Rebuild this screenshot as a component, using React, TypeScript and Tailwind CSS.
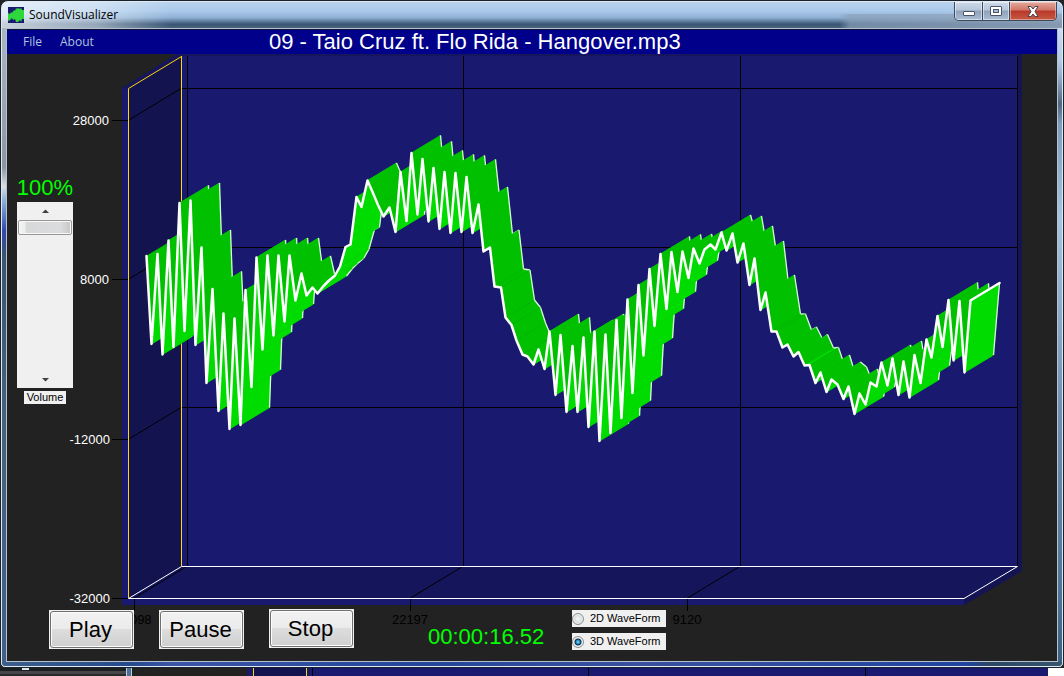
import React, { useState } from "react";

type Point = [number, number];

const WAVE: Point[] = [
  [146.5, 256], [151.5, 344], [157.5, 254], [162.5, 354.5], [168.5, 240.5], [173.5, 347], [179.5, 203], [184.5, 331],
  [190.5, 200.5], [195.5, 345], [201.5, 247.5], [206.5, 383], [212.5, 289], [218.5, 411], [223.5, 313.5], [229.5, 429],
  [234.5, 318.5], [240.5, 425], [245.5, 290], [251.5, 387], [256.5, 257.5], [262.5, 349.5], [267.5, 255.5],
  [273.5, 335.5], [278.5, 255.5], [284.5, 321.5], [289.5, 255.5], [295.5, 300.5], [301.5, 273.5], [306.5, 295.5],
  [312.5, 287.5], [317.5, 293.5], [323.5, 286], [328.5, 281], [335, 275.5], [340, 266.5], [345.5, 247], [350.5, 244.5],
  [356.5, 197], [361.5, 207], [367.5, 180.5], [373, 193], [378, 205], [383.5, 216.5], [389.5, 207.5], [395.5, 232],
  [400.5, 172], [406.5, 221], [411.5, 153], [417.5, 214.5], [422.5, 159], [428.5, 221.5], [433.5, 168], [439.5, 229],
  [444.5, 172], [450.5, 233], [455.5, 173], [461.5, 232], [466.5, 177], [472.5, 233], [478.5, 204.5], [483.5, 251.5],
  [490, 247.5], [494.5, 286.5], [501, 287.5], [505.5, 317.5], [511.5, 325], [516.5, 340.5], [522.5, 354.5],
  [527.5, 356.5], [533.5, 364.5], [538.5, 349.5], [544.5, 369], [549.5, 331.5], [555.5, 395], [560.5, 335],
  [566.5, 412], [572.5, 346], [577.5, 412], [583.5, 337.5], [588.5, 427], [594.5, 331.5], [599.5, 441], [605.5, 334.5],
  [610.5, 433], [616.5, 320], [621.5, 418], [627.5, 299.5], [632.5, 393], [638.5, 285], [643.5, 355.5], [649.5, 269],
  [654.5, 326], [660.5, 254], [666.5, 309], [671.5, 252], [677.5, 292], [682.5, 251.5], [688.5, 278], [693.5, 248.5],
  [699.5, 263.5], [704.5, 249.5], [710.5, 244.5], [715.5, 249.5], [721.5, 232.5], [726.5, 250.5], [732.5, 233.5],
  [737.5, 262.5], [743.5, 243.5], [749.5, 285], [754.5, 258.5], [760.5, 310], [765.5, 292.5], [771.5, 331.5],
  [776.5, 331.5], [782.5, 347.5], [787.5, 344.5], [793.5, 356.5], [798.5, 352], [804.5, 365.5], [809.5, 365],
  [815.5, 383], [820.5, 372.5], [826.5, 392], [831.5, 379.5], [837.5, 384.5], [843.5, 399], [848.5, 386.5],
  [854.5, 414], [859.5, 393.5], [865.5, 404.5], [870.5, 382.5], [876.5, 386.5], [881.5, 362.5], [887.5, 385.5],
  [892.5, 358.5], [898.5, 395], [903.5, 361.5], [909.5, 397.5], [914.5, 355], [920.5, 383], [926.5, 339.5],
  [931.5, 357.5], [937.5, 316], [942.5, 347], [948.5, 300], [953.5, 360.5], [959.5, 301], [964.5, 372.5], [970.5, 300.5],
];

const DX = 29;
const DY = -17.5;

function Ribbon() {
  const [lx, ly] = WAVE[WAVE.length - 1];
  return (
    <g>
      {WAVE.slice(1).map(([x2, y2], i) => {
        const [x1, y1] = WAVE[i];
        const fill = y2 < y1 ? "#00dc00" : "#00c000";
        return (
          <g key={i}>
            <polygon
              points={`${x1},${y1} ${x2},${y2} ${x2 + DX},${y2 + DY} ${x1 + DX},${y1 + DY}`}
              fill={fill}
              stroke={fill}
              strokeWidth="0.6"
            />
            <line x1={x1 + DX} y1={y1 + DY} x2={x2 + DX} y2={y2 + DY} stroke="#d8f8d8" strokeWidth="1.3" />
          </g>
        );
      })}
      <polyline
        points={[...WAVE, [lx + DX, ly + DY]].map((p) => p.join(",")).join(" ")}
        fill="none"
        stroke="#fff"
        strokeWidth="2.5"
        strokeLinejoin="round"
        strokeLinecap="round"
      />
    </g>
  );
}

function Chart() {
  return (
    <svg
      viewBox="7 54 1050 607"
      className="col-start-1 row-start-1 block h-auto w-full"
      fontFamily="'Liberation Sans', sans-serif"
      fontSize="13"
      role="img"
      aria-label="Wave form"
    >
      <rect x="7" y="54" width="1050" height="607" fill="#222222" />
      <polygon points="122,88 177,54 1022,54 1022,571 964,605 122,605" fill="#191970" />
      <polygon points="122,88 177,54 1022,54 1017,56 182,56 128,89" fill="#16165c" />
      <polygon points="1017,54 1022,54 1022,571 964,605 964,598 1017,566" fill="#141452" />
      <polygon points="128,88 181,56 181,566 128,598" fill="#131350" />
      <polygon points="128,598 181,566 1017,566 964,598" fill="#15155c" />
      <g stroke="#000" fill="none">
        <path d="M187.5 56V566M463.5 56V566M740.5 56V566M1017.5 56V566" />
        <path d="M182 88.5H1017M182 247.5H1017M182 407.5H1017" />
        <path d="M128 120.5L181 88.5M128 279.5L181 247.5M128 439.5L181 407.5" />
        <path d="M134.5 598L187.5 566M410.5 598L463.5 566M687.5 598L740.5 566" />
        <path d="M112 120.5H128M112 279.5H128M112 439.5H128M112 598.5H128" />
        <path d="M134.5 599V611M410.5 599V611M687.5 599V611" />
      </g>
      <path d="M128.5 598V88.5L181.5 56.5" fill="none" stroke="#ffd700" />
      <path d="M181.5 56V566" stroke="#ffd700" />
      <path d="M128.5 598.5L181.5 566.5H1017.5L964 598.5H128.5" fill="none" stroke="#fff" />
      <Ribbon />
      <g fill="#fff" textAnchor="end">
        <text x="109" y="125">28000</text>
        <text x="109" y="284">8000</text>
        <text x="110" y="444">-12000</text>
        <text x="110" y="603">-32000</text>
      </g>
      <g fill="#000" textAnchor="middle">
        <text x="134" y="624">11098</text>
        <text x="410" y="624">22197</text>
        <text x="687" y="624">9120</text>
      </g>
    </svg>
  );
}

function PushButton({ children, className = "" }: { children: React.ReactNode; className?: string }) {
  return (
    <button
      type="button"
      className={`h-[39px] w-[85px] border border-[#f0f0f0] bg-[#f0f0f0] font-['Liberation_Sans',sans-serif] text-[22px] text-black ${className}`}
    >
      <span className="flex h-full w-full items-center justify-center rounded-[3px] border border-[#707070] bg-[linear-gradient(#f2f2f2_0%,#ebebeb_48%,#dddddd_50%,#cfcfcf_100%)] pr-[2px] shadow-[inset_0_0_0_1px_#fcfcfc]">
        {children}
      </span>
    </button>
  );
}

function ModeOption({ label, checked, onSelect }: { label: string; checked: boolean; onSelect: () => void }) {
  return (
    <label className="flex h-[17px] w-[94px] items-center gap-[6px] bg-[#f0f0f0] text-[11px] leading-[17px] whitespace-nowrap text-black">
      <input
        type="radio"
        name="mode"
        checked={checked}
        onChange={onSelect}
        className="m-0 size-3 shrink-0 appearance-none rounded-full border border-[#8e8f8f] bg-[radial-gradient(circle,#f8f8f8_0%,#d0d3d6_70%)] shadow-[inset_0_0_0_1px_#f4f4f4] checked:bg-[radial-gradient(circle_at_50%_50%,#8fd8f5_0px,#1884b8_2px,#0b2a4a_3px,#dfe4e8_4px)]"
      />
      {label}
    </label>
  );
}

function VolumeControl() {
  const [volume, setVolume] = useState(100);
  return (
    <div className="flex w-14 flex-col items-center">
      <output htmlFor="volume" className="text-[22px] leading-7 text-[#00ff00]">
        {volume}%
      </output>
      <div className="flex h-[186px] w-14 flex-col bg-[#f0f0f0]">
        <button
          type="button"
          aria-label="Volume up"
          className="flex h-[17px] items-center justify-center"
          onClick={() => setVolume(Math.min(100, volume + 1))}
        >
          <svg width="7" height="4" viewBox="0 0 7 4"><path d="M0 4L3.5 0.5L7 4Z" fill="#404040" /></svg>
        </button>
        <input
          id="volume"
          type="range"
          min={0}
          max={100}
          value={volume}
          onChange={(e) => setVolume(Number(e.target.value))}
          className="m-0 min-h-0 w-full flex-1 appearance-none bg-transparent pt-px [direction:rtl] [writing-mode:vertical-lr] [&::-webkit-slider-thumb]:h-[15px] [&::-webkit-slider-thumb]:w-[54px] [&::-webkit-slider-thumb]:appearance-none [&::-webkit-slider-thumb]:rounded-[2px] [&::-webkit-slider-thumb]:border [&::-webkit-slider-thumb]:border-[#979797] [&::-webkit-slider-thumb]:bg-[linear-gradient(90deg,#f5f5f5_0%,#ececec_12%,#d6d8da_14%,#dadcde_80%,#c4c6c8_100%)] [&::-webkit-slider-thumb]:shadow-[inset_0_0_0_1px_#f8f8f8]"
        />
        <button
          type="button"
          aria-label="Volume down"
          className="flex h-[17px] items-center justify-center"
          onClick={() => setVolume(Math.max(0, volume - 1))}
        >
          <svg width="7" height="4" viewBox="0 0 7 4"><path d="M0 0L3.5 3.5L7 0Z" fill="#404040" /></svg>
        </button>
      </div>
      <label htmlFor="volume" className="mt-[3px] h-[13px] w-[42px] bg-[#f0f0f0] text-center text-[11px] leading-[13px] text-black">
        Volume
      </label>
    </div>
  );
}

function TitleBar() {
  return (
    <header className="flex h-[26px] items-start justify-between rounded-t-md bg-[linear-gradient(90deg,rgba(245,249,252,0.75)_0%,rgba(235,243,250,0.5)_9%,transparent_16%),linear-gradient(90deg,transparent_79%,rgba(138,160,186,0.7)_80%,rgba(150,168,190,0.8)_100%),linear-gradient(#b9d3ee_0%,#a9c8ea_35%,#8fb0d4_60%,#3a5674_85%,#46627f_100%)] bg-[length:100%_100%,100%_14px,100%_100%] bg-[position:0_0,0_100%,0_0] bg-no-repeat">
      <div className="flex h-[26px] items-center gap-[5px] pl-[6px]">
        <svg width="16" height="16" viewBox="0 0 16 16" aria-hidden="true">
          <rect width="16" height="16" fill="#191970" />
          <path d="M0 6L2 7L3 5L4 6L6 3L7 4L8 1L9 2L10 1L12 2L13 1L14 3L16 3V12L14 12L13 15L12 13L10 15L8 15L7 12L5 13L4 11L3 12L1 14L0 13Z" fill="#2fd83a" />
        </svg>
        <h1 className="font-['Open_Sans',sans-serif] text-[12px] leading-4 text-black">SoundVisualizer</h1>
      </div>
      <div className="mr-[5px] flex h-[19px] overflow-hidden rounded-b-[5px] border border-t-0 border-[#3c4a5c] bg-[#3c4a5c]">
        <button type="button" aria-label="Minimize" className="flex w-[27px] items-center justify-center bg-[linear-gradient(#ccd9e8_0%,#b6c6da_45%,#8fa2ba_50%,#a9bdd4_100%)] pt-[4px] shadow-[inset_0_0_0_1px_rgba(255,255,255,0.5)]">
          <svg width="12" height="5" viewBox="0 0 12 5"><rect x="0.5" y="0.5" width="11" height="4" rx="0.5" fill="#fff" stroke="#4a5468" /></svg>
        </button>
        <button type="button" aria-label="Maximize" className="ml-px flex w-[26px] items-center justify-center bg-[linear-gradient(#ccd9e8_0%,#b6c6da_45%,#8fa2ba_50%,#a9bdd4_100%)] shadow-[inset_0_0_0_1px_rgba(255,255,255,0.5)]">
          <svg width="12" height="10" viewBox="0 0 12 10"><rect x="0.5" y="0.5" width="11" height="9" rx="0.5" fill="#fff" stroke="#4a5468" /><rect x="3.5" y="3.5" width="5" height="3" fill="#a9bdd4" stroke="#4a5468" /></svg>
        </button>
        <button type="button" aria-label="Close" className="ml-px flex w-[46px] items-center justify-center bg-[linear-gradient(#e5a99c_0%,#cf7566_45%,#b8382a_50%,#c85a42_100%)] shadow-[inset_0_0_0_1px_rgba(255,255,255,0.4)]">
          <svg width="12" height="11" viewBox="0 0 12 11"><path d="M1 0.5H4L6 3L8 0.5H11L8 5.5L11 10.5H8L6 8L4 10.5H1L4 5.5Z" fill="#fff" stroke="#4a4454" /></svg>
        </button>
      </div>
    </header>
  );
}

function BackgroundWindow() {
  return (
    <div className="flex h-2 w-full overflow-hidden bg-[#222222]" aria-hidden="true">
      <div className="w-[126px] border-t-[3px] border-b-2 border-t-[#1d1e20] border-b-[#28282a] bg-[#46464a]">
        <div className="-mt-[3px] ml-[22px] h-[2px] w-[7px] bg-[#dce6f0]" />
      </div>
      <div className="w-[6px] border-x border-[#b8cde2] bg-[#4d6f94]" />
      <div className="w-[115px]" />
      <div className="w-[6px] bg-[#191970]" />
      <div className="w-[54px] border-x border-[#ffd700] bg-[#131350]" />
      <div className="w-[5px] bg-[#191970]" />
      <div className="flex-[276] border-l border-black bg-[#191970]" />
      <div className="flex-[277] border-l border-black bg-[#191970]" />
      <div className="flex-[183] border-l border-black bg-[#191970]" />
      <div className="w-[16px] bg-white" />
    </div>
  );
}

export default function App() {
  const [mode, setMode] = useState<"2D" | "3D">("3D");
  return (
    <div className="min-h-screen bg-[#222222] font-['Liberation_Sans',sans-serif]">
      <div className="rounded-t-lg rounded-b-[5px] border border-[#18212c] bg-[#e0e9f2] p-px">
        <TitleBar />
        <div className="flex">
          <div className="w-1 bg-[linear-gradient(#a9b6c4_0%,#8996a4_22%,#d9dfe5_25%,#8fb6dc_27%,#3247b0_32%,#3a5670_36%,#46617c_60%,#3f618a_100%)]" />
          <main className="min-w-0 flex-1 border border-[#b4c0cc] bg-[#222222]">
            <nav className="grid h-[25px] grid-cols-[262px_1fr] items-center border-t border-[#10103c] bg-[#00008b]">
              <div className="flex gap-[18px] pl-4 font-['Open_Sans',sans-serif] text-[12px] leading-4 text-[#b0c4de]">
                <button type="button">File</button>
                <button type="button">About</button>
              </div>
              <h2 className="truncate text-[22px] leading-6 text-white">09 - Taio Cruz ft. Flo Rida - Hangover.mp3</h2>
            </nav>
            <div className="grid">
              <Chart />
              <div className="col-start-1 row-start-1 flex min-w-0 flex-col justify-between pt-[120px] pb-[11px] pl-[10px]">
                <VolumeControl />
                <div className="flex items-start pl-8">
                  <div className="flex gap-[25px]">
                    <PushButton className="mt-px">Play</PushButton>
                    <PushButton className="mt-px">Pause</PushButton>
                    <PushButton>Stop</PushButton>
                  </div>
                  <time className="mt-4 ml-[74px] w-[120px] text-[22px] leading-6 text-[#00ff00]">00:00:16.52</time>
                  <div role="radiogroup" aria-label="Wave form mode" className="mt-px ml-6 flex flex-col gap-[6px]">
                    <ModeOption label="2D WaveForm" checked={mode === "2D"} onSelect={() => setMode("2D")} />
                    <ModeOption label="3D WaveForm" checked={mode === "3D"} onSelect={() => setMode("3D")} />
                  </div>
                </div>
              </div>
            </div>
          </main>
          <div className="w-1 bg-[linear-gradient(#c9dcf0_0%,#b4cce6_5%,#8fa9c4_8%,#51677e_12%,#7f9cba_15%,#a9c4e0_30%,#7290b0_60%,#4f7396_90%,#3d5f80_100%)]" />
        </div>
        <div className="h-1 rounded-b-[3px] bg-[linear-gradient(90deg,#3d5f8a_0%,#254a8c_12%,#3a55a8_16%,#24459a_40%,#3a50a0_60%,#2044a0_91%,#2c4664_93%,#35556e_100%)]" />
      </div>
      <BackgroundWindow />
    </div>
  );
}
